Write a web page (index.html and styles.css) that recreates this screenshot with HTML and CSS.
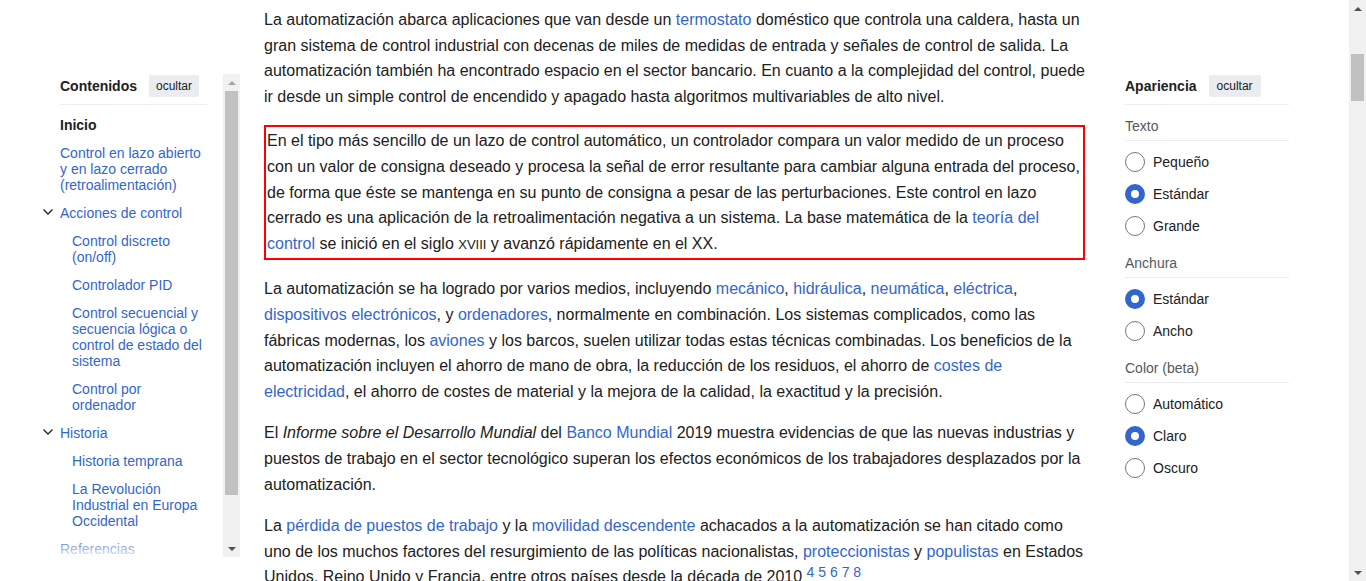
FILE: index.html
```html
<!DOCTYPE html>
<html lang="es">
<head>
<meta charset="utf-8">
<title>Automatización</title>
<link rel="stylesheet" href="styles.css">
</head>
<body>
<div class="page">
  <aside class="toc-col">
    <div class="toc-box">
      <nav class="toc">
        <div class="side-head toc-head">
          <span class="side-title">Contenidos</span>
          <span class="hide-btn">ocultar</span>
        </div>
        <ul class="toc-list">
          <li class="row lvl1 bold"><span class="chev"></span><span>Inicio</span></li>
          <li class="row lvl1"><span class="chev"></span><a href="#">Control en lazo abierto y en lazo cerrado (retroalimentación)</a></li>
          <li class="row lvl1"><span class="chev"><svg width="12" height="16" viewBox="0 0 12 16"><path d="M1.5 4.5 L6 9 L10.5 4.5" fill="none" stroke="#202122" stroke-width="1.3"/></svg></span><a href="#">Acciones de control</a></li>
          <li class="row lvl2"><a href="#">Control discreto (on/off)</a></li>
          <li class="row lvl2"><a href="#">Controlador PID</a></li>
          <li class="row lvl2"><a href="#">Control secuencial y secuencia lógica o control de estado del sistema</a></li>
          <li class="row lvl2"><a href="#">Control por ordenador</a></li>
          <li class="row lvl1"><span class="chev"><svg width="12" height="16" viewBox="0 0 12 16"><path d="M1.5 4.5 L6 9 L10.5 4.5" fill="none" stroke="#202122" stroke-width="1.3"/></svg></span><a href="#">Historia</a></li>
          <li class="row lvl2"><a href="#">Historia temprana</a></li>
          <li class="row lvl2"><a href="#">La Revolución Industrial en Europa Occidental</a></li>
          <li class="row lvl1"><span class="chev"></span><a href="#">Referencias</a></li>
          <li class="row lvl1"><span class="chev"></span><a href="#">Enlaces externos</a></li>
        </ul>
        <div class="fade"></div>
      </nav>
      <div class="vscroll">
        <div class="sb-btn"><span class="tri-up light"></span></div>
        <div class="sb-thumb toc-thumb"></div>
        <div class="sb-fill"></div>
        <div class="sb-btn"><span class="tri-down"></span></div>
      </div>
    </div>
  </aside>

  <main class="content">
    <p>La automatización abarca aplicaciones que van desde un <a href="#">termostato</a> doméstico que controla una caldera, hasta un gran sistema de control industrial con decenas de miles de medidas de entrada y señales de control de salida. La automatización también ha encontrado espacio en el sector bancario. En cuanto a la complejidad del control, puede ir desde un simple control de encendido y apagado hasta algoritmos multivariables de alto nivel.</p>
    <p class="marked">En el tipo más sencillo de un lazo de control automático, un controlador compara un valor medido de un proceso con un valor de consigna deseado y procesa la señal de error resultante para cambiar alguna entrada del proceso, de forma que éste se mantenga en su punto de consigna a pesar de las perturbaciones. Este control en lazo cerrado es una aplicación de la retroalimentación negativa a un sistema. La base matemática de la <a href="#">teoría del control</a> se inició en el siglo <span class="sc">xviii</span> y avanzó rápidamente en el XX.</p>
    <p>La automatización se ha logrado por varios medios, incluyendo <a href="#">mecánico</a>, <a href="#">hidráulica</a>, <a href="#">neumática</a>, <a href="#">eléctrica</a>, <a href="#">dispositivos electrónicos</a>, y <a href="#">ordenadores</a>, normalmente en combinación. Los sistemas complicados, como las fábricas modernas, los <a href="#">aviones</a> y los barcos, suelen utilizar todas estas técnicas combinadas. Los beneficios de la automatización incluyen el ahorro de mano de obra, la reducción de los residuos, el ahorro de <a href="#">costes de electricidad</a>, el ahorro de costes de material y la mejora de la calidad, la exactitud y la precisión.</p>
    <p>El <i>Informe sobre el Desarrollo Mundial</i> del <a href="#">Banco Mundial</a> 2019 muestra evidencias de que las nuevas industrias y puestos de trabajo en el sector tecnológico superan los efectos económicos de los trabajadores desplazados por la automatización.</p>
    <p>La <a href="#">pérdida de puestos de trabajo</a> y la <a href="#">movilidad descendente</a> achacados a la automatización se han citado como uno de los muchos factores del resurgimiento de las políticas nacionalistas, <a href="#">proteccionistas</a> y <a href="#">populistas</a> en Estados Unidos, Reino Unido y Francia, entre otros países desde la década de 2010 <sup><a href="#">4</a> <a href="#">5</a> <a href="#">6</a> <a href="#">7</a> <a href="#">8</a></sup></p>
  </main>

  <aside class="appearance">
    <div class="side-head">
      <span class="side-title">Apariencia</span>
      <span class="hide-btn">ocultar</span>
    </div>
    <div class="sec">
      <div class="sec-label">Texto</div>
      <div class="radios">
        <div class="radio"><span class="dot"></span><span>Pequeño</span></div>
        <div class="radio"><span class="dot on"></span><span>Estándar</span></div>
        <div class="radio"><span class="dot"></span><span>Grande</span></div>
      </div>
    </div>
    <div class="sec">
      <div class="sec-label">Anchura</div>
      <div class="radios">
        <div class="radio"><span class="dot on"></span><span>Estándar</span></div>
        <div class="radio"><span class="dot"></span><span>Ancho</span></div>
      </div>
    </div>
    <div class="sec">
      <div class="sec-label">Color (beta)</div>
      <div class="radios">
        <div class="radio"><span class="dot"></span><span>Automático</span></div>
        <div class="radio"><span class="dot on"></span><span>Claro</span></div>
        <div class="radio"><span class="dot"></span><span>Oscuro</span></div>
      </div>
    </div>
  </aside>

  <div class="vscroll winscroll">
    <div class="sb-btn"><span class="tri-up"></span></div>
    <div class="win-gap"></div>
    <div class="sb-thumb win-thumb"></div>
    <div class="sb-fill"></div>
    <div class="sb-btn"><span class="tri-down"></span></div>
  </div>
</div>
</body>
</html>
```

FILE: styles.css
```css
* { box-sizing: border-box; }

html, body {
  margin: 0;
  height: 100%;
  overflow: hidden;
}

body {
  font-family: "Liberation Sans", Arial, sans-serif;
  color: #202122;
  background: #fff;
}

a {
  color: #3366cc;
  text-decoration: none;
}

.page {
  display: flex;
  height: 581px;
  overflow: hidden;
}

/* ---------- left: table of contents ---------- */
.toc-col {
  flex: none;
  width: 200px;
  margin-left: 40px;
  padding-top: 74px;
}

.toc-box {
  display: flex;
  height: 483px;
}

.toc {
  flex: 1;
  position: relative;
  overflow: hidden;
  padding: 1px 16px 0 2px;
  font-size: 14px;
}

.side-head {
  display: flex;
  align-items: center;
  gap: 12px;
  height: 30px;
  padding-bottom: 7px;
  border-bottom: 1px solid #eaecf0;
}

.toc-head {
  margin-left: 18px;
}

.side-title {
  font-weight: bold;
  font-size: 14px;
}

.hide-btn {
  background: #eaecf0;
  border-radius: 2px;
  font-size: 12px;
  height: 22px;
  line-height: 22px;
  padding: 0 7px;
}

.appearance .hide-btn {
  padding: 0 8px;
}

.toc-list {
  list-style: none;
  margin: 0;
  padding: 6px 0 0;
}

.row {
  display: flex;
  padding: 6px 0;
  line-height: 16px;
}

.row.bold {
  font-weight: bold;
}

.chev {
  flex: none;
  width: 18px;
  height: 16px;
}

.chev svg {
  display: block;
}

.lvl2 {
  padding-left: 30px;
}

.fade {
  position: absolute;
  left: 0;
  right: 0;
  bottom: 0;
  height: 22px;
  background: linear-gradient(rgba(255,255,255,0), rgba(255,255,255,0.85));
}

/* ---------- scrollbars ---------- */
.vscroll {
  flex: none;
  width: 17px;
  background: #f1f1f1;
  display: flex;
  flex-direction: column;
}

.sb-btn {
  height: 17px;
  display: flex;
  align-items: center;
  justify-content: center;
  flex: none;
}

.tri-up {
  width: 0;
  height: 0;
  border-left: 4px solid transparent;
  border-right: 4px solid transparent;
  border-bottom: 4px solid #505050;
}

.tri-up.light {
  border-bottom-color: #a3a3a3;
}

.tri-down {
  width: 0;
  height: 0;
  border-left: 4px solid transparent;
  border-right: 4px solid transparent;
  border-top: 4px solid #505050;
}

.sb-thumb {
  flex: none;
  margin: 0 2px;
  background: #c1c1c1;
}

.toc-thumb {
  height: 404px;
}

.sb-fill {
  flex: 1;
}

.winscroll {
  margin-left: auto;
  height: 581px;
}

.win-gap {
  flex: none;
  height: 37px;
}

.win-thumb {
  height: 47px;
}

/* ---------- main content ---------- */
.content {
  flex: none;
  width: 821px;
  margin-left: 24px;
  padding-top: 7px;
  font-size: 16px;
  line-height: 1.6;
}

.content p {
  margin: 0 0 16px;
}

.content p.marked {
  border: 2px solid #ff0000;
  padding: 1px 1px 2px;
}

.sc {
  text-transform: uppercase;
  font-size: 13px;
}

.content sup {
  font-size: 14px;
  line-height: 1;
  vertical-align: 5px;
}

/* ---------- right: appearance ---------- */
.appearance {
  flex: none;
  width: 164px;
  margin-left: 40px;
  padding-top: 75px;
  font-size: 14px;
}

.sec {
  margin-top: 11px;
}

.sec-label {
  color: #54595d;
  line-height: 20px;
  padding-bottom: 4px;
  border-bottom: 1px solid #eaecf0;
}

.radios {
  padding: 5px 0 0;
}

.radio {
  display: flex;
  align-items: center;
  gap: 8px;
  height: 32px;
}

.dot {
  flex: none;
  width: 20px;
  height: 20px;
  border-radius: 50%;
  border: 1px solid #72777d;
  background: #fff;
}

.dot.on {
  border: 6px solid #3366cc;
}
```
